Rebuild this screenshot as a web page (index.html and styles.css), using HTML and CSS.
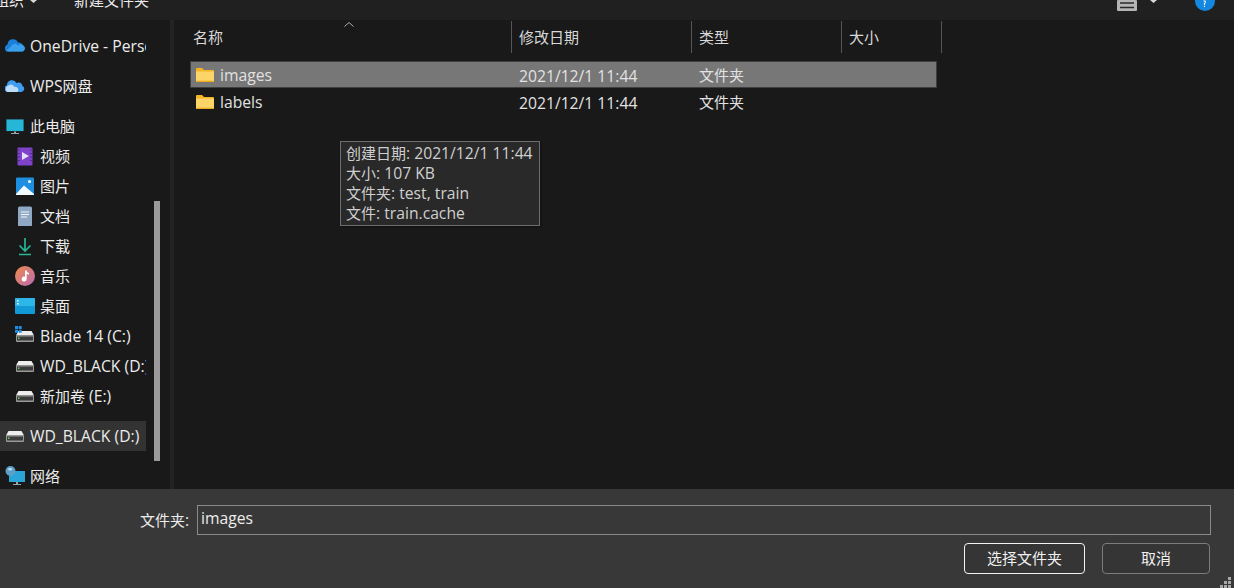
FILE: index.html
```html
<!DOCTYPE html>
<html lang="zh">
<head>
<meta charset="utf-8">
<title>选择文件夹</title>
<link rel="stylesheet" href="styles.css">
</head>
<body>
<svg class="defs" width="0" height="0" aria-hidden="true">
  <symbol id="drive" viewBox="0 0 20 20">
    <path d="M3.500 5h13l2.500 4.500H1z" fill="#ededed"/>
    <path d="M1 9.500h18v5.500a1 1 0 0 1-1 1H2a1 1 0 0 1-1-1z" fill="#9a9a9a"/>
    <path d="M2 10.500h16v4H2z" fill="#3b3b3b"/>
    <rect x="3" y="11.500" width="1.500" height="1.500" fill="#5fd35f"/>
  </symbol>
  <symbol id="folder" viewBox="0 0 18 14">
    <path d="M0 1a1 1 0 0 1 1-1h5l2 2h9a1 1 0 0 1 1 1v2H0z" fill="#f5b524"/>
    <path d="M0 3.500h18V13a1 1 0 0 1-1 1H1a1 1 0 0 1-1-1z" fill="#fbd568"/>
    <path d="M0 12.800h18V13a1 1 0 0 1-1 1H1a1 1 0 0 1-1-1z" fill="#eeaa1e"/>
  </symbol>
</svg>

<div class="toolbar">
  <div class="tool-left">
    <span class="tool-item zh">组织</span>
    <svg class="caret" width="7" height="3" viewBox="0 0 7 3"><path d="M0 0h7L3.500 3z" fill="#d8d8d8"/></svg>
    <span class="tool-new zh">新建文件夹</span>
  </div>
  <div class="tool-right">
    <svg class="view-icon" width="20" height="11" viewBox="0 0 20 11"><rect width="20" height="11" rx="1" fill="#b5b5b5"/><path d="M3 3h14M3 7.500h14" stroke="#2a2a2a" stroke-width="1.300"/></svg>
    <svg class="caret2" width="7" height="3" viewBox="0 0 7 3"><path d="M0 0h7L3.500 3z" fill="#d8d8d8"/></svg>
    <svg class="help-icon" width="20" height="11" viewBox="0 0 20 11"><circle cx="10" cy="1" r="10" fill="#1487e0"/><path d="M8.500 0.500h2.200L10.700 3 9.900 3.700V5H8.900V3.300L9.700 2.500V1.500H8.500zM8.900 5.800h1V7h-1z" fill="#fff"/></svg>
  </div>
</div>

<div class="main">
  <nav class="sidebar">
    <div class="nav-list">
      <div class="nav-row">
        <svg class="nav-icon" viewBox="0 0 20 20"><path d="M1 15a4 4 0 0 1 1.500-6.500A5.500 5.500 0 0 1 13 6.500a4 4 0 0 1 4.500 3 3 3 0 0 1 1 5.500c-.5.500-1 .5-2 .5H3c-1 0-1.500-.2-2-.5z" fill="#1c7ed6"/><path d="M6 10.500a4 4 0 0 1 7-1 3.500 3.500 0 0 1 5.500 5.500c-.5.500-1 .5-2 .5H3c-1 0-1.500-.2-2-.5z" fill="#3aa0ec"/></svg>
        <span class="nav-text lat">OneDrive - Personal</span>
      </div>
    </div>
    <div class="nav-list">
      <div class="nav-row">
        <svg class="nav-icon" viewBox="0 0 20 20"><path d="M2.500 16a3.500 3.500 0 0 1-.5-6.800A5 5 0 0 1 11.500 7a4 4 0 0 1 6 3 3.200 3.200 0 0 1-1 6z" fill="#3f9cf0"/><path d="M2.500 16a3.500 3.500 0 0 1 1-6.500 3.800 3.800 0 0 1 6 1.500 3 3 0 0 1 3 5z" fill="#bcdcf8"/></svg>
        <span class="nav-text"><span class="lat">WPS</span><span class="zh">网盘</span></span>
      </div>
    </div>
    <div class="nav-list">
      <div class="nav-row">
        <svg class="nav-icon" viewBox="0 0 20 20"><rect x="1" y="3" width="18" height="12.500" fill="#1f2f3a"/><rect x="1.500" y="3.500" width="17" height="11.500" fill="#26b6d8"/><path d="M9 15.500h2V17h3v1H6v-1h3z" fill="#9aa4ad"/></svg>
        <span class="nav-text zh">此电脑</span>
      </div>
      <div class="nav-row sub">
        <svg class="nav-icon" viewBox="0 0 20 20"><rect x="2.500" y="1.500" width="15" height="18" rx="1" fill="#7f43c9"/><path d="M7 6l7 4-7 4z" fill="#e9dcfa"/><path d="M3.500 3.500h1v1h-1zM3.500 7h1v1h-1zM3.500 10.500h1v1h-1zM3.500 14h1v1h-1zM15.500 3.500h1v1h-1zM15.500 7h1v1h-1zM15.500 10.500h1v1h-1zM15.500 14h1v1h-1z" fill="#2b1450"/></svg>
        <span class="nav-text zh">视频</span>
      </div>
      <div class="nav-row sub">
        <svg class="nav-icon" viewBox="0 0 20 20"><rect x="1" y="1.500" width="18" height="17.500" rx="1" fill="#1d8fe0"/><path d="M1 18l8-8.500 10 8.500v1H1z" fill="#f4f9fd"/><circle cx="14.500" cy="5.500" r="1.500" fill="#fff"/></svg>
        <span class="nav-text zh">图片</span>
      </div>
      <div class="nav-row sub">
        <svg class="nav-icon" viewBox="0 0 20 20"><rect x="3" y="0.500" width="14" height="20" rx="1.500" fill="#8fa8c4"/><path d="M6 6h8M6 8.500h8M6 11h6" stroke="#f2f5f8" stroke-width="1.200"/></svg>
        <span class="nav-text zh">文档</span>
      </div>
      <div class="nav-row sub">
        <svg class="nav-icon" viewBox="0 0 20 20"><path d="M10 2v13M4.500 9.500L10 15l5.500-5.500M4 18.500h12" fill="none" stroke="#26b894" stroke-width="1.700"/></svg>
        <span class="nav-text zh">下载</span>
      </div>
      <div class="nav-row sub">
        <svg class="nav-icon" viewBox="0 0 20 20"><defs><linearGradient id="music" x1="0" y1="0" x2="1" y2="1"><stop offset="0" stop-color="#f08a4a"/><stop offset="1" stop-color="#b86bb4"/></linearGradient></defs><circle cx="10" cy="10" r="10" fill="url(#music)"/><path d="M10 4.500h1.700c0 1.800 1 2.300 2.300 2.500v1.500c-1 0-1.800-.3-2.300-.8V13a2.500 2.500 0 1 1-1.700-2.400z" fill="#fff"/></svg>
        <span class="nav-text zh">音乐</span>
      </div>
      <div class="nav-row sub">
        <svg class="nav-icon" viewBox="0 0 20 20"><rect y="2" width="20" height="16" rx="1" fill="#129ad6"/><rect y="2" width="20" height="8" rx="1" fill="#2cb7e8"/><path d="M2 4h1.500v1.500H2zM2 7h1.500v1.500H2z" fill="#fff"/></svg>
        <span class="nav-text zh">桌面</span>
      </div>
      <div class="nav-row sub">
        <svg class="nav-icon" viewBox="0 0 20 20"><use href="#drive"/><path d="M0 0h3v3H0zM3.700 0h3v3h-3zM0 3.700h3v3H0zM3.700 3.700h3v3h-3z" fill="#1e8ee6"/></svg>
        <span class="nav-text"><span class="lat">Blade 14 (C:)</span></span>
      </div>
      <div class="nav-row sub">
        <svg class="nav-icon" viewBox="0 0 20 20"><use href="#drive"/></svg>
        <span class="nav-text"><span class="lat">WD_BLACK (D:)</span></span>
      </div>
      <div class="nav-row sub">
        <svg class="nav-icon" viewBox="0 0 20 20"><use href="#drive"/></svg>
        <span class="nav-text"><span class="zh">新加卷</span><span class="lat"> (E:)</span></span>
      </div>
    </div>
    <div class="nav-list">
      <div class="nav-row current">
        <svg class="nav-icon" viewBox="0 0 20 20"><use href="#drive"/></svg>
        <span class="nav-text"><span class="lat">WD_BLACK (D:)</span></span>
      </div>
    </div>
    <div class="nav-list">
      <div class="nav-row">
        <svg class="nav-icon" viewBox="0 0 20 20"><rect x="4" y="5" width="16" height="11" fill="#2aa5d8"/><path d="M11 16h2v2h3v1H8v-1h3z" fill="#9aa4ad"/><circle cx="5.500" cy="5" r="5" fill="#5b9ec9"/><path d="M2.500 3c2-1.500 4-1.500 5 0-1 2-3 2-5 0z" fill="#bcdcf0"/></svg>
        <span class="nav-text zh">网络</span>
      </div>
    </div>
  </nav>
  <div class="scroll-track"><div class="scroll-thumb"></div></div>
  <div class="divider"></div>

  <section class="files">
    <svg class="sort" width="10" height="5" viewBox="0 0 10 5"><path d="M.5 4.500L5 .5l4.500 4" fill="none" stroke="#b0b0b0"/></svg>
    <div class="head">
      <div class="col col-name zh">名称</div>
      <div class="col col-date zh">修改日期</div>
      <div class="col col-type zh">类型</div>
      <div class="col col-size zh">大小</div>
    </div>
    <div class="file-row selected">
      <div class="cell-name"><svg class="folder" width="18" height="14"><use href="#folder"/></svg><span class="lat">images</span></div>
      <div class="cell-date lat">2021/12/1 11:44</div>
      <div class="cell-type zh">文件夹</div>
    </div>
    <div class="file-row">
      <div class="cell-name"><svg class="folder" width="18" height="14"><use href="#folder"/></svg><span class="lat">labels</span></div>
      <div class="cell-date lat">2021/12/1 11:44</div>
      <div class="cell-type zh">文件夹</div>
    </div>
    <div class="tooltip">
      <div><span class="zh">创建日期</span><span class="lat">: 2021/12/1 11:44</span></div>
      <div><span class="zh">大小</span><span class="lat">: 107 KB</span></div>
      <div><span class="zh">文件夹</span><span class="lat">: test, train</span></div>
      <div><span class="zh">文件</span><span class="lat">: train.cache</span></div>
    </div>
  </section>
</div>

<footer class="bottom">
  <div class="name-line">
    <label class="name-label"><span class="zh">文件夹</span><span class="lat">:</span></label>
    <div class="name-input lat">images</div>
  </div>
  <div class="buttons">
    <div class="btn primary zh">选择文件夹</div>
    <div class="btn cancel zh">取消</div>
  </div>
  <svg class="grip" width="12" height="11" viewBox="0 0 12 11"><path d="M8 0h3v3H8zM4 4h3v3H4zM8 4h3v3H8zM0 8h3v3H0zM4 8h3v3H4zM8 8h3v3H8z" fill="#a8a8a8"/></svg>
</footer>
</body>
</html>
```
FILE: styles.css
```css
* { box-sizing: border-box; }
html, body { margin: 0; padding: 0; }
body {
  width: 1234px;
  height: 588px;
  overflow: hidden;
  position: relative;
  display: flex;
  flex-direction: column;
  background: #191919;
  color: #e6e6e6;
  font-family: "Open Sans", "Noto Sans CJK SC", sans-serif;
  font-size: 15px;
}
.defs { position: absolute; }
.zh { font-family: "Noto Sans CJK SC", sans-serif; font-size: 15px; }
.lat { font-family: "Open Sans", sans-serif; font-size: 15.7px; }

/* toolbar */
.toolbar {
  flex: 0 0 20px;
  height: 20px;
  background: #202020;
  display: flex;
  justify-content: space-between;
  overflow: hidden;
}
.tool-left { display: flex; align-items: flex-end; margin-left: -6px; height: 10px; }
.tool-item { line-height: 20px; color: #ececec; }
.caret { align-self: flex-start; margin: 0 0 0 6px; }
.tool-new { margin-left: 37px; line-height: 20px; color: #ececec; }
.tool-right { display: flex; align-items: flex-start; }
.view-icon { margin-right: 13px; }
.caret2 { margin-right: 38px; }
.help-icon { margin-right: 19px; }

/* main */
.main { flex: 0 0 469px; height: 469px; display: flex; overflow: hidden; }
.sidebar {
  flex: 0 0 146px;
  width: 146px;
  padding-top: 11px;
  display: flex;
  flex-direction: column;
  gap: 10px;
  overflow: hidden;
}
.nav-row {
  height: 30px;
  flex: 0 0 30px;
  display: flex;
  align-items: center;
  padding-left: 5px;
  white-space: nowrap;
  overflow: hidden;
}
.nav-row.sub { padding-left: 15px; }
.nav-row.current { background: #333333; }
.nav-icon { width: 20px; height: 20px; flex: none; margin-right: 5px; }
.nav-text { color: #ececec; line-height: 30px; }

.scroll-track { flex: 0 0 8px; margin-left: 8px; width: 6px; }
.scroll-thumb { width: 6px; height: 260px; margin-top: 181px; background: #9a9a9a; }
.divider { flex: 0 0 4px; margin-left: 8px; background: #232323; }

/* files */
.files { flex: 1; position: relative; padding-left: 16px; }
.sort { position: absolute; left: 170px; top: 2px; }
.head { display: flex; height: 33px; margin-top: 1px; }
.col {
  height: 32px;
  line-height: 32px;
  padding-left: 7px;
  color: #d8d8d8;
  border-right: 1px solid #555;
}
.col-name { width: 322px; padding-left: 3px; }
.col-date { width: 180px; }
.col-type { width: 150px; }
.col-size { width: 100px; }

.file-row {
  display: flex;
  width: 747px;
  height: 27px;
  align-items: center;
  color: #e2e2e2;
  border: 1px solid transparent;
}
.file-row.selected { background: #777777; border-color: #3f3f3f; margin-top: 7px; }
.cell-name { width: 328px; display: flex; align-items: center; padding-left: 5px; }
.folder { margin-right: 6px; flex: none; }
.cell-date { width: 180px; line-height: 24px; margin-top: 2px; }
.cell-type { flex: 1; line-height: 24px; }

.tooltip {
  position: absolute;
  left: 166px;
  top: 121px;
  width: 200px;
  height: 85px;
  padding: 1px 5px;
  background: #292929;
  border: 1px solid #6e6e6e;
  color: #cfcfcf;
  box-shadow: 1px 1px 2px rgba(0,0,0,.4);
}
.tooltip div { height: 20px; line-height: 20px; white-space: nowrap; }

/* bottom */
.bottom {
  flex: 1;
  position: relative;
  background: #383838;
  display: flex;
  flex-direction: column;
  padding-top: 16px;
}
.name-line { display: flex; align-items: center; height: 30px; margin-left: 140px; }
.name-label { width: 57px; color: #ececec; }
.name-input {
  width: 1014px;
  height: 30px;
  line-height: 24px;
  padding-left: 3px;
  border: 1px solid #8a8a8a;
  color: #eee;
}
.buttons { display: flex; margin-top: 8px; margin-left: 964px; gap: 17px; }
.btn {
  height: 31px;
  line-height: 28px;
  text-align: center;
  border-radius: 4px;
  color: #f0f0f0;
  background: #353535;
}
.primary { width: 121px; border: 1px solid #f2f2f2; }
.cancel { width: 108px; border: 1px solid #7c7c7c; }
.grip { position: absolute; right: 2px; bottom: 0; }
```
